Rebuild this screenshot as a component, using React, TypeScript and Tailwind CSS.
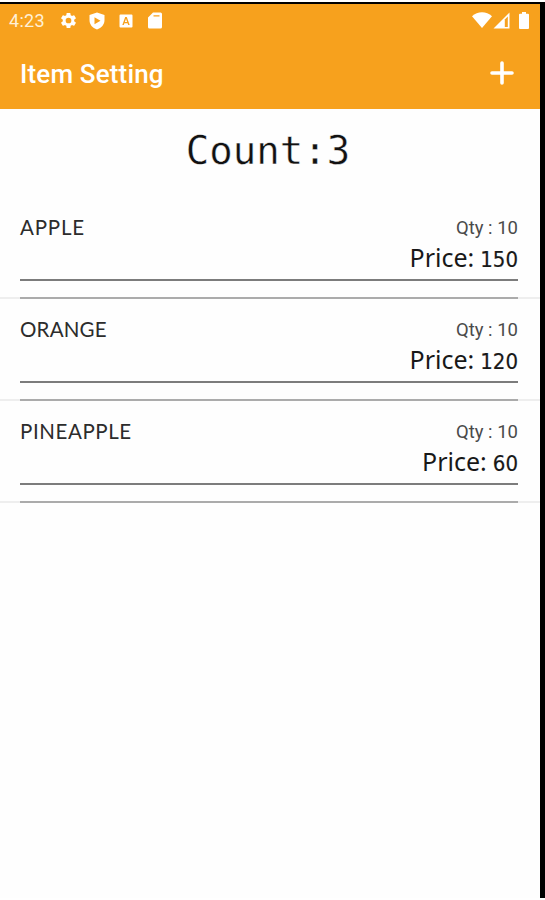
import { clsx } from "clsx";

type Item = {
  name: string;
  qty: number;
  price: number;
  tracking: string;
};

const items: Item[] = [
  { name: "APPLE", qty: 10, price: 150, tracking: "tracking-[0.8px]" },
  { name: "ORANGE", qty: 10, price: 120, tracking: "tracking-[0.2px]" },
  { name: "PINEAPPLE", qty: 10, price: 60, tracking: "tracking-[0.6px]" },
];

function GearIcon() {
  return (
    <svg viewBox="0 0 24 24" className="size-[19px]" fill="currentColor" aria-hidden>
      <path
        fillRule="evenodd"
        d="M19.14 12.94c.04-.3.06-.61.06-.94 0-.32-.02-.64-.07-.94l2.03-1.58a.49.49 0 0 0 .12-.61l-1.92-3.32a.488.488 0 0 0-.59-.22l-2.39.96c-.5-.38-1.03-.7-1.62-.94l-.36-2.54a.484.484 0 0 0-.48-.41h-3.84c-.24 0-.43.17-.47.41l-.36 2.54c-.59.24-1.13.57-1.62.94l-2.39-.96a.48.48 0 0 0-.59.22L2.74 8.87c-.12.21-.08.47.12.61l2.03 1.58c-.05.3-.09.63-.09.94s.02.64.07.94l-2.03 1.58a.49.49 0 0 0-.12.61l1.92 3.32c.12.22.37.29.59.22l2.39-.96c.5.38 1.03.7 1.62.94l.36 2.54c.05.24.24.41.48.41h3.84c.24 0 .44-.17.47-.41l.36-2.54c.59-.24 1.13-.56 1.62-.94l2.39.96c.22.08.47 0 .59-.22l1.92-3.32a.49.49 0 0 0-.12-.61l-2.01-1.58zM12 15.6A3.6 3.6 0 1 1 12 8.4a3.6 3.6 0 0 1 0 7.2z"
      />
    </svg>
  );
}

function ShieldPlayIcon() {
  return (
    <svg viewBox="0 0 16 18" className="h-[18px] w-4" fill="currentColor" aria-hidden>
      <path fillRule="evenodd" d="M8 .5 15.5 3v5c0 4.500-3 8-7.500 9.500C3.500 16 .5 12.500.5 8V3zM5.500 5.200v7l6-3.500z" />
    </svg>
  );
}

function LetterIcon() {
  return (
    <svg viewBox="0 0 14 14" className="size-[14px]" fill="currentColor" aria-hidden>
      <path
        fillRule="evenodd"
        d="M1.500.5h11a1 1 0 0 1 1 1v11a1 1 0 0 1-1 1h-11a1 1 0 0 1-1-1v-11a1 1 0 0 1 1-1zM6.200 3 3.300 11h1.500l.6-1.700h3.200l.6 1.700h1.500L7.800 3zM7 4.800 8.100 8H5.900z"
      />
    </svg>
  );
}

function SdCardIcon() {
  return (
    <svg viewBox="0 0 14 17" className="h-[17px] w-[14px]" fill="currentColor" aria-hidden>
      <path fillRule="evenodd" d="M5 .5h7.500A1.500 1.500 0 0 1 14 2v13a1.500 1.500 0 0 1-1.500 1.500h-11A1.500 1.500 0 0 1 0 15V5.500zM5.500 3.200v1.300h6V3.200z" />
    </svg>
  );
}

function StatusBar() {
  return (
    <div className="flex h-[33px] items-center pl-[9px] pr-[11px]">
      <span className="w-[50px] text-[18px] leading-none tracking-[0.3px] text-[#fff0d6]">4:23</span>
      <div className="flex flex-1 items-center">
        <GearIcon />
        <span className="ml-[11px]">
          <ShieldPlayIcon />
        </span>
        <span className="ml-[14px]">
          <LetterIcon />
        </span>
        <span className="ml-[15px]">
          <SdCardIcon />
        </span>
      </div>
      <svg viewBox="0 0 20 16" className="mb-px h-4 w-5" fill="currentColor" aria-hidden>
        <path d="M0 4.200C5.500-1 14.500-1 20 4.200L10 16z" />
      </svg>
      <svg viewBox="0 0 17 17" className="ml-px h-[17px] w-[17px]" aria-hidden>
        <path d="M.5 16.500 16.500.5v16z" fill="currentColor" />
        <path d="M11.800 7.500 14.800 4.500v10.500h-3z" fill="#f7a11f" />
      </svg>
      <svg viewBox="0 0 10 17" className="ml-[9px] h-[17px] w-[10px]" fill="currentColor" aria-hidden>
        <path d="M3 0h4v1.700h2a1 1 0 0 1 1 1V16a1 1 0 0 1-1 1H1a1 1 0 0 1-1-1V2.700a1 1 0 0 1 1-1h2z" />
      </svg>
    </div>
  );
}

function ItemRow({ item }: { item: Item }) {
  return (
    <li className="h-[102px]">
      <div className="ml-5 mr-[22px] h-[84px] border-b-2 border-[#7c7c7c] pt-[17px]">
        <div className="flex h-[26px] items-center justify-between">
          <span className={clsx("font-['Lato'] text-[20.500px] leading-none text-[#2c2c2c]", item.tracking)}>
            {item.name}
          </span>
          <span className="pt-[2px] font-['Roboto'] text-[18.500px] leading-none text-[#4a4a4a]">Qty : {item.qty}</span>
        </div>
        <div className="flex h-[34px] items-baseline justify-end text-[#181818]">
          <span className="font-['Noto_Sans'] text-[25px] leading-[34px]">Price:</span>
          <span className="ml-[6px] font-['DejaVu_Sans_Condensed','DejaVu_Sans'] text-[22px] [-webkit-text-stroke:0.2px_#181818]">
            {item.price}
          </span>
        </div>
      </div>
      <div className="h-4" />
      <div className="h-[2px] bg-[#eeeeee] pl-5 pr-[22px]">
        <div className="h-full bg-[#ababab]" />
      </div>
    </li>
  );
}

export default function App() {
  return (
    <div className="h-[900px] w-[545px] overflow-hidden bg-white pt-[2px] font-['Roboto',sans-serif]">
      <div className="h-[896px] border-r-[5px] border-t-2 border-black bg-[#fefefe]">
        <header className="h-[105px] bg-[#f7a11d] text-white">
          <StatusBar />
          <div className="flex h-[72px] items-center justify-between pl-5 pr-[26px]">
            <h1 className="pt-[2px] text-[26px] font-medium leading-none tracking-[0.15px]">Item Setting</h1>
            <svg viewBox="0 0 24 24" className="size-6" fill="none" stroke="currentColor" strokeWidth="3.600" strokeLinecap="round" aria-hidden>
              <path d="M12 2v20M2 12h20" />
            </svg>
          </div>
        </header>
        <p className="flex h-[88px] items-center justify-center pb-[6px] pr-[4px] font-['DejaVu_Sans_Mono'] text-[39px] leading-none text-[#111] [-webkit-text-stroke:0.4px_#fefefe]">
          Count:3
        </p>
        <ul>
          {items.map((item) => (
            <ItemRow key={item.name} item={item} />
          ))}
        </ul>
      </div>
    </div>
  );
}
